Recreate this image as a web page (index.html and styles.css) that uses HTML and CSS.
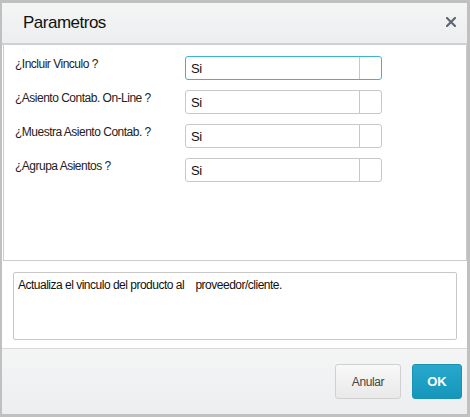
FILE: index.html
```html
<!DOCTYPE html>
<html lang="es">
<head>
    <meta charset="UTF-8">
    <meta name="viewport" content="width=device-width, initial-scale=1.0">
    <title>Parametros</title>
    <link rel="stylesheet" href="styles.css">
</head>
<body>
    <div class="dialog">
        <div class="dialog-header">
            <h1>Parametros</h1>
            <button class="close-btn" type="button" aria-label="Cerrar">
                <svg width="10" height="10" viewBox="0 0 10 10">
                    <path d="M1 1 L9 9 M9 1 L1 9" stroke="#5f6873" stroke-width="2.2" stroke-linecap="square"/>
                </svg>
            </button>
        </div>

        <div class="params-panel">
            <div class="param-row">
                <label>¿Incluir Vinculo ?</label>
                <div class="select focused"><span>Si</span><div class="select-arrow"></div></div>
            </div>
            <div class="param-row">
                <label>¿Asiento Contab. On-Line ?</label>
                <div class="select"><span>Si</span><div class="select-arrow"></div></div>
            </div>
            <div class="param-row">
                <label>¿Muestra Asiento Contab. ?</label>
                <div class="select"><span>Si</span><div class="select-arrow"></div></div>
            </div>
            <div class="param-row">
                <label>¿Agrupa Asientos ?</label>
                <div class="select"><span>Si</span><div class="select-arrow"></div></div>
            </div>
        </div>

        <div class="help-section">
            <div class="help-box">Actualiza el vinculo del producto al &nbsp;&nbsp; proveedor/cliente.</div>
        </div>

        <div class="dialog-footer">
            <button type="button" class="btn btn-cancel">Anular</button>
            <button type="button" class="btn btn-ok">OK</button>
        </div>
    </div>
</body>
</html>
```

FILE: styles.css
```css
* {
    margin: 0;
    padding: 0;
    box-sizing: border-box;
}

body {
    font-family: 'Liberation Sans', Arial, sans-serif;
    background: #c0c0c0;
    width: 470px;
    height: 417px;
    padding: 3px 3px 3px 2px;
}

.dialog {
    width: 465px;
    height: 411px;
    background: #fff;
    display: flex;
    flex-direction: column;
}

.dialog-header {
    height: 42px;
    background: linear-gradient(#f4f5f5, #eceeef);
    border-bottom: 2px solid #cfd0d1;
    display: flex;
    align-items: center;
    justify-content: space-between;
    padding: 0 11px 1px 21px;
}

.dialog-header h1 {
    font-size: 17px;
    font-weight: normal;
    color: #111;
    letter-spacing: -0.5px;
}

.close-btn {
    background: none;
    border: none;
    width: 10px;
    height: 10px;
    display: flex;
    cursor: pointer;
    margin-bottom: 2px;
}

.params-panel {
    height: 216px;
    margin-left: 1px;
    border: 1px solid #cccccc;
    border-top: none;
    padding: 11px 0 0 11px;
    display: flex;
    flex-direction: column;
    gap: 10px;
}

.param-row {
    display: flex;
    height: 24px;
}

.param-row label {
    width: 170px;
    font-size: 12px;
    letter-spacing: -0.5px;
    color: #222;
    padding-top: 1px;
}

.select {
    width: 197px;
    height: 24px;
    border: 1px solid #c8c8c8;
    border-radius: 3px;
    display: flex;
    align-items: center;
    font-size: 13px;
    color: #111;
}

.select.focused {
    border-color: #3eb2d2;
}

.select span {
    flex: 1;
    padding-left: 5px;
    padding-top: 1px;
    letter-spacing: -0.3px;
}

.select-arrow {
    width: 22px;
    height: 100%;
    border-left: 1px solid #c8c8c8;
}

.help-section {
    height: 87px;
    padding: 11px 0 0 11px;
}

.help-box {
    width: 444px;
    height: 68px;
    border: 1px solid #c8c8c8;
    border-radius: 2px;
    padding: 5px 4px;
    font-size: 12px;
    letter-spacing: -0.5px;
    color: #111;
}

.dialog-footer {
    flex: 1;
    border-top: 1px solid #d8d8d8;
    background: linear-gradient(#f4f5f5, #eceef0);
    display: flex;
    justify-content: flex-end;
    align-items: flex-start;
    gap: 11px;
    padding: 15px 5px 0 0;
}

.btn {
    height: 35px;
    border-radius: 3px;
    font-family: 'Liberation Sans', Arial, sans-serif;
    cursor: pointer;
}

.btn-cancel {
    width: 66px;
    background: linear-gradient(#f8f8f8, #e9e9e9);
    border: 1px solid #d0d0d0;
    color: #444;
    font-size: 12px;
    letter-spacing: -0.4px;
}

.btn-ok {
    width: 50px;
    background: linear-gradient(#28a8cc, #1596ba);
    border: 1px solid #1a90b2;
    color: #fff;
    font-size: 13px;
    font-weight: bold;
}
```
